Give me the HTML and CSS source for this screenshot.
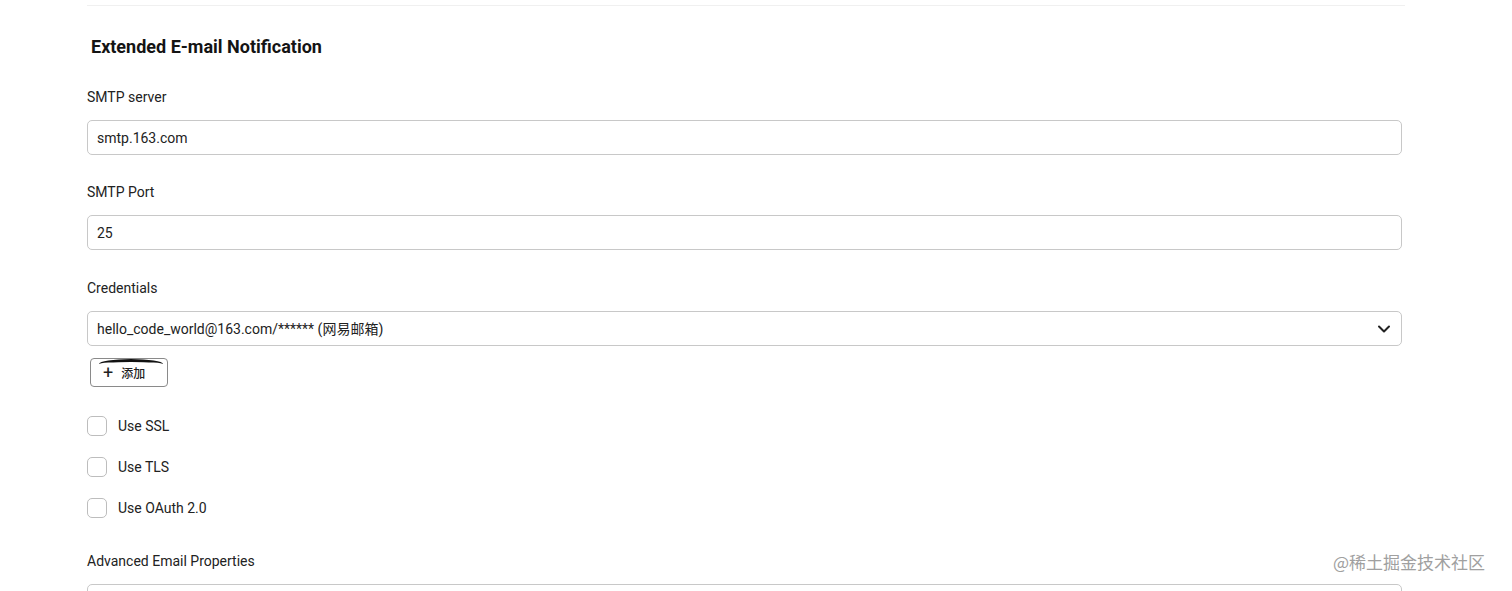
FILE: index.html
```html
<!DOCTYPE html>
<html lang="en">
<head>
<meta charset="utf-8">
<title>Extended E-mail Notification</title>
<link rel="stylesheet" href="styles.css">
</head>
<body>
<div class="page">
  <div class="sep"></div>
  <h2 class="title">Extended E-mail Notification</h2>

  <div class="field">
    <div class="label">SMTP server</div>
    <div class="input">smtp.163.com</div>
  </div>

  <div class="field">
    <div class="label">SMTP Port</div>
    <div class="input">25</div>
  </div>

  <div class="field cred">
    <div class="label">Credentials</div>
    <div class="input select">
      <span>hello_code_world@163.com/****** (网易邮箱)</span>
      <svg class="chev" width="14" height="14" viewBox="0 0 14 14"><path d="M2 4.5 L7 9.5 L12 4.5" fill="none" stroke="#222" stroke-width="2" stroke-linecap="round" stroke-linejoin="round"/></svg>
    </div>
    <button class="add"><span class="plus">+</span><span class="addtxt">添加</span></button>
  </div>

  <div class="checks">
    <label class="check"><span class="box"></span>Use SSL</label>
    <label class="check"><span class="box"></span>Use TLS</label>
    <label class="check"><span class="box"></span>Use OAuth 2.0</label>
  </div>

  <div class="field adv">
    <div class="label">Advanced Email Properties</div>
    <div class="input"></div>
  </div>
</div>
<div class="watermark">@稀土掘金技术社区</div>
</body>
</html>
```
FILE: styles.css
```css
html, body {
  margin: 0;
  padding: 0;
  background: #fff;
  height: 591px;
  overflow: hidden;
}
body {
  font-family: Roboto, "Noto Sans CJK SC", sans-serif;
  color: #1f1f1f;
  position: relative;
}
.page {
  padding: 5px 110px 0 87px;
}
.sep {
  height: 1px;
  background: #f0f0f0;
  margin-right: -3px;
}
.title {
  margin: 29px 0 0 4px;
  font-size: 18px;
  line-height: 24px;
  font-weight: 700;
  color: #141414;
}
.field {
  margin-top: 28px;
}
.field + .field {
  margin-top: 27px;
}
.field + .field.cred {
  margin-top: 28px;
}
.label {
  font-size: 14px;
  line-height: 20px;
  color: #222;
}
.input {
  margin-top: 13px;
  height: 35px;
  box-sizing: border-box;
  border: 1.5px solid #c8c8c8;
  border-radius: 5px;
  padding: 0 9px;
  font-size: 14px;
  line-height: 32px;
  color: #222;
  display: flex;
  align-items: center;
}
.select {
  justify-content: space-between;
  padding-right: 10px;
}
.chev { display: block; }
.add {
  position: relative;
  margin: 12px 0 0 3px;
  width: 78px;
  height: 29px;
  box-sizing: border-box;
  border: 1.5px solid #8a8a8a;
  border-radius: 4px;
  background: #fff;
  font-family: Roboto, "Noto Sans CJK SC", sans-serif;
  font-size: 12px;
  color: #222;
  display: flex;
  align-items: center;
  padding: 0 0 0 12px;
  gap: 8px;
}
.add::before {
  content: "";
  position: absolute;
  left: 8px;
  right: 4px;
  top: 0px;
  height: 6px;
  border-top: 3px solid #111;
  border-radius: 50% 50% 0 0 / 5px 5px 0 0;
}
.plus {
  font-size: 18px;
  line-height: 1;
  font-weight: 400;
}
.addtxt {
  font-weight: 500;
}
.checks {
  margin-top: 29px;
  display: flex;
  flex-direction: column;
  gap: 21px;
}
.check {
  display: flex;
  align-items: center;
  gap: 11px;
  font-size: 14px;
  line-height: 20px;
  color: #222;
}
.box {
  width: 20px;
  height: 20px;
  box-sizing: border-box;
  border: 1.5px solid #bdbdbd;
  border-radius: 5px;
}
.field.adv {
  margin-top: 33px;
}
.watermark {
  position: absolute;
  left: 1333px;
  top: 550px;
  font-size: 17px;
  line-height: 24px;
  color: #a0a0a0;
  font-family: "Noto Sans CJK SC", sans-serif;
}
```
